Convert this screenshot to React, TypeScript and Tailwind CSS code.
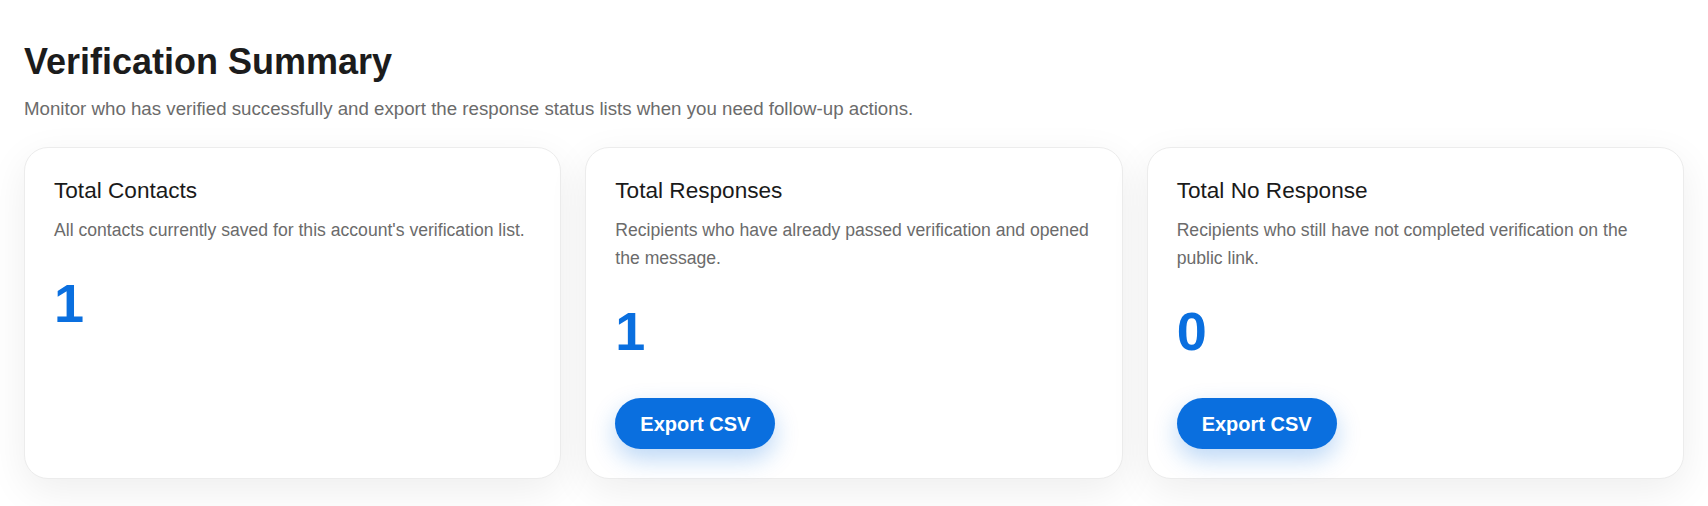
import React from "react";

type Card = {
  title: string;
  desc: string;
  value: string;
  exportable: boolean;
};

const cards: Card[] = [
  {
    title: "Total Contacts",
    desc: "All contacts currently saved for this account's verification list.",
    value: "1",
    exportable: false,
  },
  {
    title: "Total Responses",
    desc: "Recipients who have already passed verification and opened the message.",
    value: "1",
    exportable: true,
  },
  {
    title: "Total No Response",
    desc: "Recipients who still have not completed verification on the public link.",
    value: "0",
    exportable: true,
  },
];

export default function App() {
  return (
    <div className="min-h-screen bg-white px-6 pt-[44px] pb-10 font-['Liberation_Sans',Arial,sans-serif]">
      <h1 className="text-[36px] font-bold leading-none text-[#1c1c1c]">
        Verification Summary
      </h1>
      <p className="mt-[15px] text-[18.7px] leading-[28px] text-[#6b6b6b]">
        Monitor who has verified successfully and export the response status lists when you need follow-up actions.
      </p>
      <div className="mt-[24px] grid grid-cols-3 gap-6">
        {cards.map((c) => (
          <div
            key={c.title}
            className="flex flex-col rounded-[24px] border border-[#ececec] bg-white px-[29px] pt-[29px] pb-[29px] shadow-[0_12px_40px_rgba(0,0,0,0.07)]"
          >
            <h2 className="text-[22.6px] leading-[28px] text-[#1a1a1a]">{c.title}</h2>
            <p className="mt-[11px] text-[17.6px] leading-[28.2px] text-[#6b6b6b]">
              {c.desc}
            </p>
            <div className="mt-[32px] text-[54px] font-bold leading-none text-[#0a6fdf]">
              {c.value}
            </div>
            {c.exportable && (
              <div className="mt-[40px]">
                <button className="h-[51px] rounded-full bg-[#0a6fdf] px-[25px] text-[20px] font-bold text-white shadow-[0_10px_24px_rgba(10,111,223,0.28)]">
                  Export CSV
                </button>
              </div>
            )}
          </div>
        ))}
      </div>
    </div>
  );
}
